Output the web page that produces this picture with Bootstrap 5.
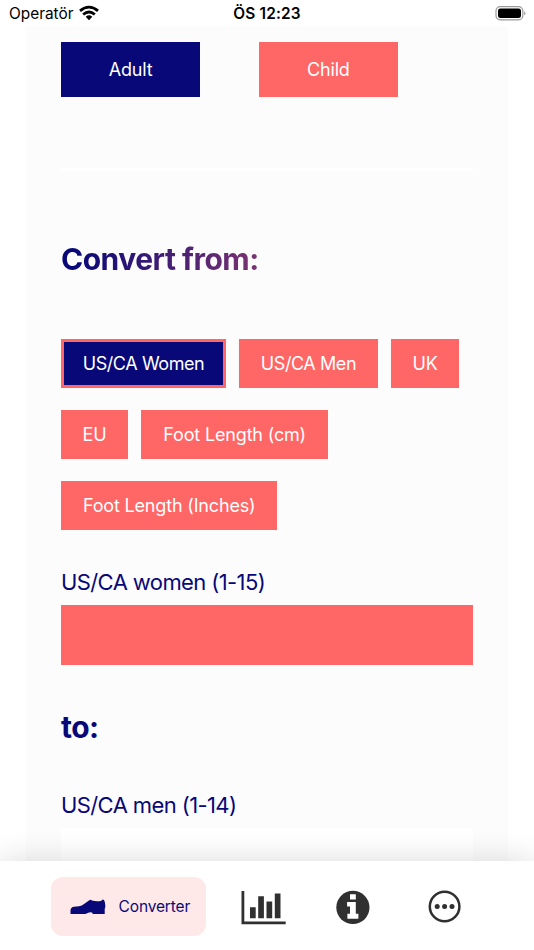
<!DOCTYPE html>
<html lang="en">
<head>
<meta charset="utf-8">
<meta name="viewport" content="width=device-width, initial-scale=1">
<title>Shoe size converter</title>
<link rel="stylesheet" href="https://cdn.jsdelivr.net/npm/bootstrap@5.3.0/dist/css/bootstrap.min.css">
<style>
:root { --navy: #080878; --coral: #ff6666; --ink: #303030; }
body { font-family: Inter, "Liberation Sans", sans-serif; background: #fff; color: var(--navy); }
.screen { height: 950px; }
.status { height: 26px; flex: none; color: #000; font-size: 15.4px; line-height: 28px; padding: 0 8px 0 9px; }
.status .clock { font-weight: 600; letter-spacing: .15px; }
.panel { background: #fcfcfc; margin: 0 26px; padding: 16px 35px 0; height: 835px; }
.btn { --bs-btn-color: #fff; --bs-btn-border-radius: 0; --bs-btn-border-width: 0; --bs-btn-bg: var(--coral);
  --bs-btn-hover-bg: var(--coral); --bs-btn-hover-color: #fff; --bs-btn-padding-y: 0; font-size: 18px; font-weight: 400; letter-spacing: -.17px; }
.btn.chosen { background: var(--navy); }
.age .btn { width: 139.3px; height: 54.5px; }
.age { gap: 58.4px; }
.rule { height: 3px; background: #fff; margin-top: 71.5px; }
.title { font-size: 30px; font-weight: 700; line-height: 40px; margin: 68px 0 0; letter-spacing: -.5px;
  background: linear-gradient(90deg, #080878 3%, #ff6666 100%); -webkit-background-clip: text; background-clip: text; color: transparent; }
.chips { gap: 22px 13px; margin-top: 60px; width: 412px; }
.chips .btn { height: 49px; --bs-btn-padding-x: 0; }
.chips .w-women, .chips .w-men { letter-spacing: -.42px; }
.chips .chosen { border: 3px solid var(--coral); }
.w-women { width: 165px; } .w-men { width: 139px; } .w-uk { width: 68.4px; }
.w-eu { width: 67px; } .w-cm { width: 187.4px; } .w-inch { width: 216.4px; }
.form-label { font-size: 22px; font-weight: 400; line-height: 30px; margin: 0; display: block; letter-spacing: -.6px; }
.form-control { border: 0; border-radius: 0; height: 60.4px; padding: 0 16px; }
.size-in, .size-in:focus { background: var(--coral); }
.size-out { background: #fff; }
.first { margin-top: 37px; }
.first .form-control { margin-top: 8px; }
.to { font-size: 30px; line-height: 40px; font-weight: 700; margin: 41.6px 0 0; letter-spacing: -.5px; }
.second { margin-top: 43px; }
.second .form-control { margin-top: 8px; height: 33px; }
.tabs { height: 89px; background: #fff; box-shadow: 0 0 32px rgba(0,0,0,.15); padding-left: 51.4px; z-index: 5; }
.tabs a { color: var(--ink); }
.tabs .current { width: 155px; height: 59px; margin-top: 16.4px; border-radius: 12px; background: #ffe8e8; color: var(--navy); font-size: 15.5px; font-weight: 400; padding-left: 18.2px; letter-spacing: -.15px; }
.tabs svg { display: block; }
.shoe { margin-right: 13px; }
.t-chart { margin: 29px 0 0 34.5px; } .t-info { margin: 29px 0 0 50px; } .t-more { margin: 29px 0 0 58px; }
</style>
<script src="https://cdn.jsdelivr.net/npm/bootstrap@5.3.0/dist/js/bootstrap.bundle.min.js"></script>
</head>
<body>
<div class="screen position-relative overflow-hidden">
  <header class="status d-flex justify-content-between">
    <div class="d-flex operator"><span>Operatör</span>
      <svg class="ms-1" width="22" height="26" viewBox="0 0 22 26" fill="none" stroke="#000" stroke-width="2.8"><path d="M2 10.9Q11 3.3 20 10.9M5.2 14.5Q11 9.6 16.8 14.5"/><path d="M7.7 16.7Q11 13.8 14.3 16.7L11 20.2Z" fill="#000" stroke="none"/></svg>
    </div>
    <span class="clock position-absolute start-50 translate-middle-x">ÖS 12:23</span>
    <svg width="31" height="26" viewBox="0 0 31 26"><rect x="1" y="6.6" width="26.8" height="13.3" rx="4.2" fill="none" stroke="#999" stroke-width="1.2"/><rect x="3" y="8.4" width="23" height="9.7" rx="2.4"/><path d="M29.2 11q2.4 2.2 0 4.5Z" fill="#999"/></svg>
  </header>
  <main class="panel">
    <div class="d-flex age">
      <button class="btn chosen" type="button">Adult</button>
      <button class="btn" type="button">Child</button>
    </div>
    <div class="rule"></div>
    <h1 class="title">Convert from:</h1>
    <div class="chips d-flex flex-wrap">
      <button class="btn chosen w-women" type="button">US/CA Women</button>
      <button class="btn w-men" type="button">US/CA Men</button>
      <button class="btn w-uk" type="button">UK</button>
      <button class="btn w-eu" type="button">EU</button>
      <button class="btn w-cm" type="button">Foot Length (cm)</button>
      <button class="btn w-inch" type="button">Foot Length (Inches)</button>
    </div>
    <div class="first">
      <label class="form-label" for="from">US/CA women (1-15)</label>
      <input class="form-control size-in" id="from" type="text">
    </div>
    <h2 class="to">to:</h2>
    <div class="second">
      <label class="form-label" for="out">US/CA men (1-14)</label>
      <input class="form-control size-out" id="out" type="text">
    </div>
  </main>
  <nav class="tabs d-flex position-relative">
    <a href="#" class="current d-flex align-items-center text-decoration-none">
      <svg class="shoe" width="36" height="16" viewBox="0 0 36 16"><path fill="currentColor" d="M.5 14.9V11Q1 8.1 4 7.7L9 7.3Q12 6.8 14 5L19 1.4Q20.5.2 22 1.5Q26.5 3 31.5 1.8L32 .8H33.8L34.5 2Q36 7 34.7 10V14.9H22.5V13.8Q20 12.4 15.5 14.9Z"/></svg>
      <span>Converter</span>
    </a>
    <a href="#" class="t-chart" aria-label="Charts"><svg width="45" height="35" viewBox="0 0 45 35" fill="currentColor"><path d="M.5 1H3.3V31.4H44.7V34.2H.5ZM9 17.3H14.7V28.3H9ZM17.2 6.3H22.9V28.3H17.2ZM25.5 11.6H31.2V28.3H25.5ZM33.8 3.4H39.5V28.3H33.8Z"/></svg></a>
    <a href="#" class="t-info" aria-label="Information"><svg width="34" height="35" viewBox="0 0 34 35"><circle cx="16.9" cy="17.4" r="16.6" fill="currentColor"/><path fill="#fff" d="M14 4.2H19.8V9.4H14ZM11.1 12H19.8V23.8H22.4V28.7H11.4V23.8H14V16.4H11.1Z"/></svg></a>
    <a href="#" class="t-more" aria-label="More"><svg width="34" height="35" viewBox="0 0 34 35"><circle cx="16.6" cy="16.5" r="14.8" fill="none" stroke="currentColor" stroke-width="2.5"/><g fill="currentColor"><circle cx="9.2" cy="16.5" r="2.5"/><circle cx="16.6" cy="16.5" r="2.5"/><circle cx="24" cy="16.5" r="2.5"/></g></svg></a>
  </nav>
</div>
</body>
</html>
